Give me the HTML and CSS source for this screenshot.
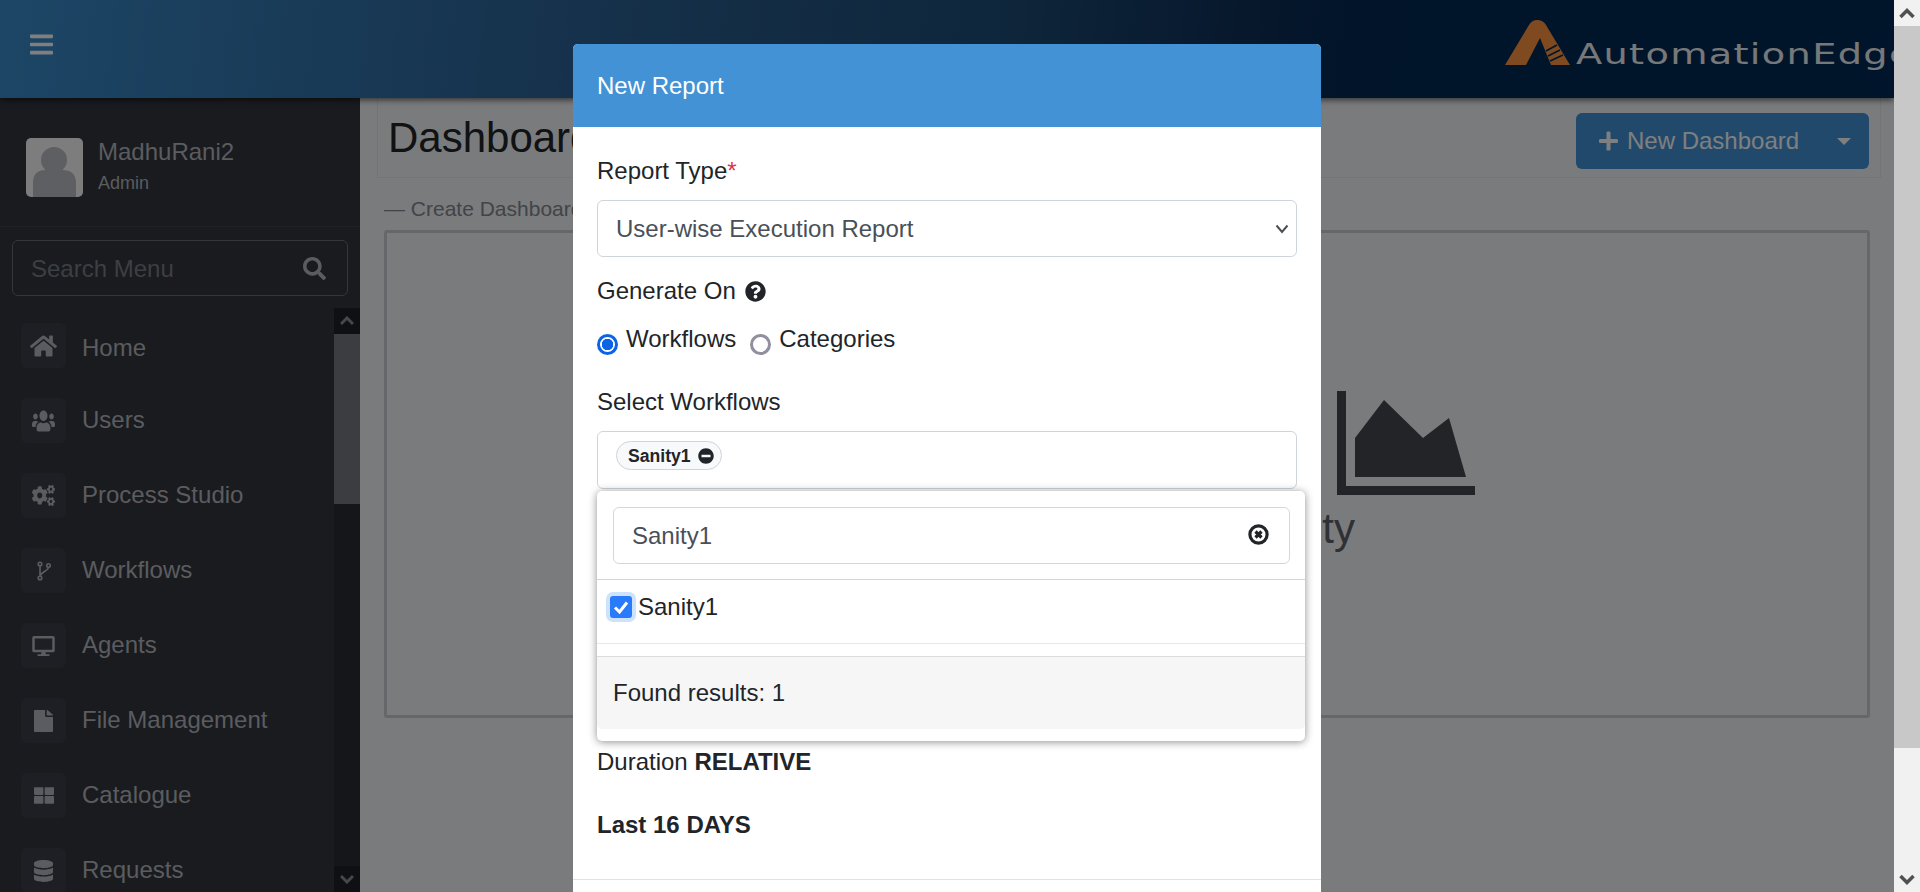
FILE: index.html
```html
<!DOCTYPE html>
<html lang="en">
<head>
    <meta charset="UTF-8">
    <meta name="viewport" content="width=device-width, initial-scale=1.0">
    <title>AutomationEdge Dashboard</title>
    <link rel="stylesheet" href="styles.css">
</head>
<body>
    <div class="page">
        <!-- Top bar -->
        <header class="topbar">
            <svg class="menu-icon" width="23" height="27" viewBox="0 0 448 512"><path d="M16 132h416c8.837 0 16-7.163 16-16V76c0-8.837-7.163-16-16-16H16C7.163 60 0 67.163 0 76v40c0 8.837 7.163 16 16 16zm0 160h416c8.837 0 16-7.163 16-16v-40c0-8.837-7.163-16-16-16H16c-8.837 0-16 7.163-16 16v40c0 8.837 7.163 16 16 16zm0 160h416c8.837 0 16-7.163 16-16v-40c0-8.837-7.163-16-16-16H16c-8.837 0-16 7.163-16 16v40c0 8.837 7.163 16 16 16z"/></svg>
            <div class="logo">
                <svg class="logo-svg" width="66" height="46" viewBox="0 0 66 46"><path class="logo-mark" d="M0 45 L24 5 Q27 0 32 0 Q38 0 41 5 L65 45 H46 L35 18 L21 45 Z"/><path class="logo-stripes" d="M41 31 L52 25 M43 36 L55 30 M45 41 L58 35"/></svg>
                <span class="logo-text">AutomationEdge</span>
            </div>
        </header>

        <div class="layout">
            <!-- Sidebar -->
            <aside class="sidebar">
                <div class="user-block">
                    <svg class="avatar" width="57" height="59" viewBox="0 0 57 59"><rect width="57" height="59" rx="5" fill="#fafafa"/><circle cx="28" cy="22" r="13" fill="#babec4"/><path d="M7 59 V45 Q7 32 20 32 Q28 37 36 32 Q50 32 50 45 V59 Z" fill="#babec4"/></svg>
                    <div class="user-text">
                        <div class="user-name">MadhuRani2</div>
                        <div class="user-role">Admin</div>
                    </div>
                </div>
                <div class="menu-search">
                    <div class="menu-search-box">
                        <span class="menu-search-text">Search Menu</span>
                        <svg width="23" height="23" viewBox="0 0 512 512"><path d="M505 442.7L405.3 343c-4.5-4.5-10.6-7-17-7H372c27.6-35.3 44-79.7 44-128C416 93.1 322.9 0 208 0S0 93.1 0 208s93.1 208 208 208c48.3 0 92.7-16.4 128-44v16.3c0 6.4 2.5 12.5 7 17l99.7 99.7c9.4 9.4 24.6 9.4 33.9 0l28.3-28.3c9.4-9.4 9.4-24.6.1-34zM208 336c-70.7 0-128-57.2-128-128 0-70.7 57.2-128 128-128 70.7 0 128 57.2 128 128 0 70.7-57.2 128-128 128z"/></svg>
                    </div>
                </div>
                <div class="nav-wrap">
                    <nav class="nav-list">
                        <a class="nav-item home"><span class="nav-tile"><svg width="27" height="24" viewBox="0 0 576 512"><path d="M280.37 148.26L96 300.11V464a16 16 0 0 0 16 16l112.06-.29a16 16 0 0 0 15.92-16V368a16 16 0 0 1 16-16h64a16 16 0 0 1 16 16v95.64a16 16 0 0 0 16 16.05L464 480a16 16 0 0 0 16-16V300L295.67 148.26a12.19 12.19 0 0 0-15.3 0zM571.6 251.47L488 182.56V44.05a12 12 0 0 0-12-12h-56a12 12 0 0 0-12 12v72.61L318.47 43a48 48 0 0 0-61 0L4.34 251.47a12 12 0 0 0-1.6 16.9l25.5 31A12 12 0 0 0 45.15 301l235.22-193.74a12.19 12.19 0 0 1 15.3 0L530.9 301a12 12 0 0 0 16.9-1.6l25.5-31a12 12 0 0 0-1.7-16.93z"/></svg></span>Home</a>
                        <a class="nav-item"><span class="nav-tile"><svg width="23" height="24" viewBox="0 0 640 512" preserveAspectRatio="none"><path d="M96 224c35.3 0 64-28.7 64-64s-28.7-64-64-64-64 28.7-64 64 28.7 64 64 64zm448 0c35.3 0 64-28.7 64-64s-28.7-64-64-64-64 28.7-64 64 28.7 64 64 64zm32 32h-64c-17.6 0-33.5 7.1-45.1 18.6 40.3 22.1 68.9 62 75.1 109.4h66c17.7 0 32-14.3 32-32v-32c0-35.3-28.7-64-64-64zm-256 0c61.9 0 112-50.1 112-112S381.9 32 320 32 208 82.1 208 144s50.1 112 112 112zm76.8 32h-8.3c-20.8 10-43.9 16-68.5 16s-47.6-6-68.5-16h-8.3C179.6 288 128 339.6 128 403.2V432c0 26.5 21.5 48 48 48h288c26.5 0 48-21.5 48-48v-28.8c0-63.6-51.6-115.2-115.2-115.2zm-223.7-13.4C161.5 263.1 145.6 256 128 256H64c-35.3 0-64 28.7-64 64v32c0 17.7 14.3 32 32 32h65.9c6.3-47.4 34.9-87.3 75.2-109.4z"/></svg></span>Users</a>
                        <a class="nav-item"><span class="nav-tile"><svg width="23" height="21" viewBox="0 0 640 512" preserveAspectRatio="none"><path d="M512.1 191l-8.2 14.3c-3 5.3-9.4 7.5-15.1 5.4-11.8-4.4-22.6-10.7-32.1-18.6-4.6-3.8-5.8-10.5-2.8-15.7l8.2-14.3c-6.9-8-12.3-17.3-15.9-27.4h-16.5c-6 0-11.2-4.3-12.2-10.3-2-12-2.1-24.6 0-37.1 1-6 6.2-10.4 12.2-10.4h16.5c3.6-10.1 9-19.4 15.9-27.4l-8.2-14.3c-3-5.2-1.9-11.9 2.8-15.7 9.5-7.9 20.4-14.2 32.1-18.6 5.7-2.1 12.1.1 15.1 5.4l8.2 14.3c10.5-1.9 21.2-1.9 31.7 0L552 6.3c3-5.3 9.4-7.5 15.1-5.4 11.8 4.4 22.6 10.7 32.1 18.6 4.6 3.8 5.8 10.5 2.8 15.7l-8.2 14.3c6.9 8 12.3 17.3 15.9 27.4h16.5c6 0 11.2 4.3 12.2 10.3 2 12 2.1 24.6 0 37.1-1 6-6.2 10.4-12.2 10.4h-16.5c-3.6 10.1-9 19.4-15.9 27.4l8.2 14.3c3 5.2 1.9 11.9-2.8 15.7-9.5 7.9-20.4 14.2-32.1 18.6-5.7 2.1-12.1-.1-15.1-5.4l-8.2-14.3c-10.4 1.9-21.2 1.9-31.7 0zm-10.5-58.8c38.5 29.6 82.4-14.3 52.8-52.8-38.5-29.7-82.4 14.3-52.8 52.8zM386.3 286.1l33.7 16.8c10.1 5.8 14.5 18.1 10.5 29.1-8.9 24.2-26.4 46.4-42.6 65.8-7.4 8.9-20.2 11.1-30.3 5.3l-29.1-16.8c-16 13.7-34.6 24.6-54.9 31.7v33.6c0 11.6-8.3 21.6-19.7 23.6-24.6 4.2-50.4 4.4-75.9 0-11.5-2-20-11.9-20-23.6V418c-20.3-7.2-38.9-18-54.9-31.7L74 403c-10 5.8-22.9 3.6-30.3-5.3-16.2-19.4-33.3-41.6-42.2-65.7-4-10.9.4-23.2 10.5-29.1l33.3-16.8c-3.9-20.9-3.9-42.4 0-63.4L12 205.8c-10.1-5.8-14.6-18.1-10.5-29 8.9-24.2 26-46.4 42.2-65.8 7.4-8.9 20.2-11.1 30.3-5.3l29.1 16.8c16-13.7 34.6-24.6 54.9-31.7V57.1c0-11.5 8.2-21.5 19.6-23.5 24.6-4.2 50.5-4.4 76-.1 11.5 2 20 11.9 20 23.6v33.6c20.3 7.2 38.9 18 54.9 31.7l29.1-16.8c10-5.8 22.9-3.6 30.3 5.3 16.2 19.4 33.2 41.6 42.1 65.8 4 10.9.1 23.2-10 29.1l-33.7 16.8c3.9 21 3.9 42.5 0 63.5zm-117.6 21.1c59.2-77-28.7-164.9-105.7-105.7-59.2 77 28.7 164.9 105.7 105.7zm243.4 182.7l-8.2 14.3c-3 5.3-9.4 7.5-15.1 5.4-11.8-4.4-22.6-10.7-32.1-18.6-4.6-3.8-5.8-10.5-2.8-15.7l8.2-14.3c-6.9-8-12.3-17.3-15.9-27.4h-16.5c-6 0-11.2-4.3-12.2-10.3-2-12-2.1-24.6 0-37.1 1-6 6.2-10.4 12.2-10.4h16.5c3.6-10.1 9-19.4 15.9-27.4l-8.2-14.3c-3-5.2-1.9-11.9 2.8-15.7 9.5-7.9 20.4-14.2 32.1-18.6 5.7-2.1 12.1.1 15.1 5.4l8.2 14.3c10.5-1.9 21.2-1.9 31.7 0l8.2-14.3c3-5.3 9.4-7.5 15.1-5.4 11.8 4.4 22.6 10.7 32.1 18.6 4.6 3.8 5.8 10.5 2.8 15.7l-8.2 14.3c6.9 8 12.3 17.3 15.9 27.4h16.5c6 0 11.2 4.3 12.2 10.3 2 12 2.1 24.6 0 37.1-1 6-6.2 10.4-12.2 10.4h-16.5c-3.6 10.1-9 19.4-15.9 27.4l8.2 14.3c3 5.2 1.9 11.9-2.8 15.7-9.5 7.9-20.4 14.2-32.1 18.6-5.7 2.1-12.1-.1-15.1-5.4l-8.2-14.3c-10.4 1.9-21.2 1.9-31.7 0zM501.6 431c38.5 29.6 82.4-14.3 52.8-52.8-38.5-29.6-82.4 14.3-52.8 52.8z"/></svg></span>Process Studio</a>
                        <a class="nav-item"><span class="nav-tile"><svg class="branch" width="14" height="20" viewBox="0 0 14 20"><circle cx="3" cy="3" r="1.8"/><circle cx="3" cy="17" r="1.8"/><circle cx="11.5" cy="4.5" r="1.8"/><path d="M3 5 V15 M11.5 6.5 C11 10 4 11 3 15"/></svg></span>Workflows</a>
                        <a class="nav-item"><span class="nav-tile"><svg width="23" height="20" viewBox="0 0 576 512"><path d="M528 0H48C21.5 0 0 21.5 0 48v320c0 26.5 21.5 48 48 48h192l-16 48h-72c-13.3 0-24 10.7-24 24s10.7 24 24 24h272c13.3 0 24-10.7 24-24s-10.7-24-24-24h-72l-16-48h192c26.5 0 48-21.5 48-48V48c0-26.5-21.5-48-48-48zm-16 352H64V64h448v288z"/></svg></span>Agents</a>
                        <a class="nav-item"><span class="nav-tile"><svg width="19" height="22" viewBox="0 0 384 512" preserveAspectRatio="none"><path d="M224 136V0H24C10.7 0 0 10.7 0 24v464c0 13.3 10.7 24 24 24h336c13.3 0 24-10.7 24-24V160H248c-13.2 0-24-10.8-24-24zm160-14.1v6.1H256V0h6.1c6.4 0 12.5 2.5 17 7l97.9 98c4.5 4.5 7 10.6 7 16.9z"/></svg></span>File Management</a>
                        <a class="nav-item"><span class="nav-tile"><svg width="20" height="19" viewBox="0 0 512 512" preserveAspectRatio="none"><path d="M296 32h192c13.255 0 24 10.745 24 24v160c0 13.255-10.745 24-24 24H296c-13.255 0-24-10.745-24-24V56c0-13.255 10.745-24 24-24zm-80 0H24C10.745 32 0 42.745 0 56v160c0 13.255 10.745 24 24 24h192c13.255 0 24-10.745 24-24V56c0-13.255-10.745-24-24-24zM0 296v160c0 13.255 10.745 24 24 24h192c13.255 0 24-10.745 24-24V296c0-13.255-10.745-24-24-24H24c-13.255 0-24 10.745-24 24zm296 184h192c13.255 0 24-10.745 24-24V296c0-13.255-10.745-24-24-24H296c-13.255 0-24 10.745-24 24v160c0 13.255 10.745 24 24 24z"/></svg></span>Catalogue</a>
                        <a class="nav-item"><span class="nav-tile"><svg width="19" height="22" viewBox="0 0 448 512" preserveAspectRatio="none"><path d="M448 73.143v45.714C448 159.143 347.667 192 224 192S0 159.143 0 118.857V73.143C0 32.857 100.333 0 224 0s224 32.857 224 73.143zM448 176v102.857C448 319.143 347.667 352 224 352S0 319.143 0 278.857V176c48.125 33.143 136.208 48.572 224 48.572S399.874 209.143 448 176zm0 160v102.857C448 479.143 347.667 512 224 512S0 479.143 0 438.857V336c48.125 33.143 136.208 48.572 224 48.572S399.874 369.143 448 336z"/></svg></span>Requests</a>
                    </nav>
                    <div class="nav-scrollbar">
                        <div class="nav-scroll-btn"><svg width="14" height="10" viewBox="0 0 14 10"><path d="M1 8 L7 2 L13 8"/></svg></div>
                        <div class="nav-scroll-thumb"></div>
                        <div class="nav-scroll-track"></div>
                        <div class="nav-scroll-btn"><svg width="14" height="10" viewBox="0 0 14 10"><path d="M1 2 L7 8 L13 2"/></svg></div>
                    </div>
                </div>
            </aside>

            <!-- Dashboard page under the dialog -->
            <main class="main">
                <div class="title-card">
                    <h2 class="page-title">Dashboard</h2>
                    <button class="new-btn">
                        <svg width="19" height="22" viewBox="0 0 448 512"><path d="M416 208H272V64c0-17.67-14.33-32-32-32h-32c-17.67 0-32 14.33-32 32v144H32c-17.67 0-32 14.33-32 32v32c0 17.67 14.33 32 32 32h144v144c0 17.67 14.33 32 32 32h32c17.67 0 32-14.33 32-32V304h144c17.67 0 32-14.33 32-32v-32c0-17.67-14.33-32-32-32z"/></svg>
                        <span>New Dashboard</span>
                        <i class="btn-caret"></i>
                    </button>
                </div>
                <div class="create-line">— Create Dashboard</div>
                <div class="empty-box">
                    <svg class="empty-chart" width="138" height="104" viewBox="0 0 138 104"><path d="M0 0 H9 V95 H138 V104 H0 Z M18 47 L47 9 L86 47 L112 27 L129 86 H18 Z"/></svg>
                    <div class="empty-text">No Activity</div>
                </div>
            </main>
        </div>

        <div class="backdrop"></div>

        <!-- New Report dialog -->
        <div class="modal">
            <div class="modal-header">New Report</div>
            <div class="modal-body">
                <div class="field-label first">Report Type<span class="required">*</span></div>
                <div class="select-wrap">
                    <select class="form-select"><option>User-wise Execution Report</option></select>
                    <svg class="select-arrow" width="14" height="10" viewBox="0 0 14 10"><path d="M1.5 1.5 L7 8 L12.5 1.5"/></svg>
                </div>
                <div class="field-label generate">
                    Generate On
                    <svg width="21" height="21" viewBox="0 0 512 512"><path d="M504 256c0 136.997-111.043 248-248 248S8 392.997 8 256C8 119.083 119.043 8 256 8s248 111.083 248 248zM262.655 90c-54.497 0-89.255 22.957-116.549 63.758-3.536 5.286-2.353 12.415 2.715 16.258l34.699 26.31c5.205 3.947 12.621 3.008 16.665-2.122 17.864-22.658 30.113-35.797 57.303-35.797 20.429 0 45.698 13.148 45.698 32.958 0 14.976-12.363 22.667-32.534 33.976C247.128 238.528 216 254.941 216 296v4c0 6.627 5.373 12 12 12h56c6.627 0 12-5.373 12-12v-1.333c0-28.462 83.186-29.647 83.186-106.667 0-58.002-60.165-102-116.531-102zM256 338c-25.365 0-46 20.635-46 46 0 25.364 20.635 46 46 46s46-20.636 46-46c0-25.365-20.635-46-46-46z"/></svg>
                </div>
                <div class="radio-row">
                    <label class="radio-label"><input type="radio" name="gen" class="radio" checked>Workflows</label>
                    <label class="radio-label"><input type="radio" name="gen" class="radio">Categories</label>
                </div>
                <div class="field-label workflows">Select Workflows</div>
                <div class="multi-wrap">
                    <div class="multi-box">
                        <span class="tag">Sanity1
                            <svg width="16" height="16" viewBox="0 0 512 512"><path d="M256 8C119 8 8 119 8 256s111 248 248 248 248-111 248-248S393 8 256 8zM124 296c-6.6 0-12-5.4-12-12v-56c0-6.6 5.4-12 12-12h264c6.6 0 12 5.4 12 12v56c0 6.6-5.4 12-12 12H124z"/></svg>
                        </span>
                    </div>
                    <div class="dropdown">
                        <div class="dropdown-search">
                            <div class="search-box">
                                <span>Sanity1</span>
                                <svg class="clear-icon" width="21" height="21" viewBox="0 0 21 21"><circle cx="10.5" cy="10.5" r="8.6"/><path d="M7.5 7.5 L13.5 13.5 M13.5 7.5 L7.5 13.5"/></svg>
                            </div>
                        </div>
                        <div class="dropdown-item">
                            <span class="check"><svg width="22" height="22" viewBox="0 0 22 22"><path d="M5 11.5 L9.5 16 L17 6.5"/></svg></span>
                            Sanity1
                        </div>
                        <div class="dropdown-gap"></div>
                        <div class="dropdown-foot">Found results: 1</div>
                    </div>
                </div>
                <div class="duration">Duration <strong>RELATIVE</strong></div>
                <div class="last-days"><strong>Last 16 DAYS</strong></div>
            </div>
            <div class="modal-footer"></div>
        </div>
    </div>

    <!-- Window scrollbar -->
    <div class="page-scrollbar">
        <div class="scroll-btn"><svg width="16" height="11" viewBox="0 0 16 11"><path d="M1.5 9 L8 2.5 L14.5 9"/></svg></div>
        <div class="scroll-thumb"></div>
        <div class="scroll-track"></div>
        <div class="scroll-btn"><svg width="16" height="11" viewBox="0 0 16 11"><path d="M1.5 2 L8 8.5 L14.5 2"/></svg></div>
    </div>
</body>
</html>
```

FILE: styles.css
```css
* {
    box-sizing: border-box;
}
html, body {
    margin: 0;
    height: 100%;
}
body {
    display: flex;
    height: 892px;
    overflow: hidden;
    font-family: "Liberation Sans", Arial, sans-serif;
    font-size: 24px;
    line-height: 36px;
    color: #212529;
}
.page {
    position: relative;
    flex: 1;
    min-width: 0;
    height: 892px;
    overflow: hidden;
    background-color: #f4f6fa;
}

/* top bar */
.topbar {
    position: relative;
    z-index: 2;
    display: flex;
    align-items: center;
    height: 98px;
    padding-left: 30px;
    background: linear-gradient(97deg, #3a8ccc 0%, #2c6296 31%, #1e4e78 52%, #0e2f58 66%, #022854 72%, #002a56 100%);
    box-shadow: 0 2px 6px rgba(0, 0, 0, 0.6);
}
.menu-icon {
    fill: #fff;
    margin-top: -10px;
}
.logo {
    position: relative;
    flex-shrink: 0;
    align-self: flex-start;
    width: 389px;
    height: 60px;
    margin-left: auto;
    margin-top: 20px;
    overflow: hidden;
    white-space: nowrap;
}
.logo-svg {
    display: block;
}
.logo-mark {
    fill: #fe943e;
}
.logo-stripes {
    fill: none;
    stroke: #002a56;
    stroke-width: 1.6;
}
.logo-text {
    position: absolute;
    top: 16px;
    left: 71px;
    font-family: "DejaVu Sans", sans-serif;
    font-size: 29px;
    line-height: 36px;
    color: #eef0f2;
    letter-spacing: 1px;
    transform: scaleX(1.32);
    transform-origin: left center;
}

.layout {
    display: flex;
    height: 794px;
}

/* sidebar */
.sidebar {
    display: flex;
    flex-direction: column;
    flex-shrink: 0;
    width: 360px;
    background-color: #32363f;
    color: #b6b8be;
}
.user-block {
    display: flex;
    gap: 15px;
    height: 129px;
    padding: 40px 0 0 26px;
    border-bottom: 1px solid #3e424b;
}
.user-name {
    margin-top: -4px;
    line-height: 36px;
}
.user-role {
    font-size: 18px;
    line-height: 26px;
}
.menu-search {
    padding: 13px 12px 12px;
}
.menu-search-box {
    display: flex;
    align-items: center;
    justify-content: space-between;
    height: 56px;
    padding: 2px 21px 0 18px;
    border: 1.5px solid #6a6d74;
    border-radius: 6px;
}
.menu-search-box svg {
    fill: #b6b8be;
    margin-top: -2px;
}
.menu-search-text {
    color: #7a7e85;
}
.nav-wrap {
    display: flex;
    flex: 1;
    min-height: 0;
}
.nav-list {
    flex: 1;
    display: flex;
    flex-direction: column;
    gap: 30px;
    padding: 15px 0 0 21px;
    overflow: hidden;
}
.nav-item {
    display: flex;
    align-items: center;
    flex-shrink: 0;
    gap: 16px;
    height: 45px;
    padding-bottom: 2px;
}
.nav-item.home {
    padding: 4px 0 0;
}
.nav-tile {
    display: flex;
    align-items: center;
    justify-content: center;
    align-self: flex-start;
    width: 45px;
    height: 45px;
    border-radius: 6px;
    background-color: #3a3e48;
}
.nav-item.home .nav-tile {
    margin-top: -4px;
}
.nav-tile svg {
    fill: #b6b8be;
}
.nav-tile .branch {
    fill: none;
    stroke: #b6b8be;
    stroke-width: 1.6;
}
.nav-scrollbar {
    display: flex;
    flex-direction: column;
    flex-shrink: 0;
    width: 26px;
    background-color: #282c34;
}
.nav-scroll-btn {
    display: flex;
    align-items: center;
    justify-content: center;
    flex-shrink: 0;
    height: 26px;
    background-color: #1e2026;
}
.nav-scroll-btn svg {
    fill: none;
    stroke: #8c8e94;
    stroke-width: 3;
}
.nav-scroll-thumb {
    flex-shrink: 0;
    height: 170px;
    background-color: #787a80;
}
.nav-scroll-track {
    flex: 1;
}

/* main area */
.main {
    flex: 1;
    min-width: 0;
    padding: 0 13px 0 17px;
}
.title-card {
    display: flex;
    align-items: flex-start;
    justify-content: space-between;
    height: 80px;
    padding: 15px 11px 0 10px;
    border: 1.5px solid #e6e8ec;
    border-top: 0;
}
.page-title {
    margin: 0;
    font-size: 42px;
    font-weight: 400;
    line-height: 50px;
}
.new-btn {
    display: flex;
    align-items: center;
    width: 293px;
    height: 56px;
    padding: 0 18px 0 23px;
    border: 0;
    border-radius: 6px;
    background-color: #4392d6;
    color: #fff;
    font: inherit;
}
.new-btn svg {
    fill: #fff;
    margin-right: 9px;
}
.btn-caret {
    margin-left: auto;
    border-left: 7px solid transparent;
    border-right: 7px solid transparent;
    border-top: 7px solid #fff;
}
.create-line {
    margin-top: 15px;
    padding-left: 7px;
    font-size: 21px;
    line-height: 32px;
    color: #848890;
}
.empty-box {
    display: flex;
    flex-direction: column;
    align-items: flex-end;
    height: 488px;
    margin: 5px 11px 0 7px;
    padding: 158px 392px 0 0;
    border: 3px solid #cdcfd4;
    border-radius: 3px;
}
.empty-chart {
    fill: #44494f;
}
.empty-text {
    margin-top: 9px;
    margin-right: 120px;
    font-size: 42px;
    line-height: 50px;
    color: #5e6269;
    white-space: nowrap;
}

.backdrop {
    position: absolute;
    inset: 0;
    z-index: 5;
    background-color: rgba(0, 0, 0, 0.5);
}

/* dialog */
.modal {
    position: absolute;
    z-index: 6;
    top: 44px;
    left: 573px;
    width: 748px;
    background-color: #fff;
    border-radius: 5px 5px 0 0;
}
.modal-header {
    height: 83px;
    padding: 24px 24px 0;
    border-radius: 5px 5px 0 0;
    background-color: #4392d6;
    color: #fff;
}
.modal-body {
    padding: 26px 24px 36px;
}
.field-label {
    height: 36px;
}
.required {
    color: #dc3545;
}
.select-wrap {
    position: relative;
    margin-top: 11px;
}
.form-select {
    display: block;
    width: 100%;
    height: 57px;
    padding: 0 18px;
    border: 1.5px solid #ced4da;
    border-radius: 6px;
    background-color: #fff;
    appearance: none;
    color: #495057;
    font: inherit;
}
.select-arrow {
    position: absolute;
    top: 24px;
    right: 8px;
    fill: none;
    stroke: #495057;
    stroke-width: 2;
}
.generate {
    display: flex;
    align-items: center;
    gap: 9px;
    margin-top: 16px;
}
.generate svg {
    fill: #212529;
}
.radio-row {
    display: flex;
    gap: 14px;
    margin-top: 12px;
}
.radio-label {
    display: flex;
    align-items: flex-start;
}
.radio {
    width: 21px;
    height: 21px;
    margin: 13px 8px 0 0;
    border: 3px solid #8f8f9d;
    border-radius: 50%;
    background-color: #fff;
    appearance: none;
}
.radio:checked {
    border-color: #0b63e5;
    background: radial-gradient(circle, #0b63e5 0 5.5px, #fff 6px);
}
.workflows {
    margin-top: 27px;
}
.multi-wrap {
    position: relative;
    margin-top: 11px;
}
.multi-box {
    display: flex;
    align-items: flex-start;
    height: 58px;
    padding: 9px 18px 0;
    border: 1.5px solid #ced4da;
    border-radius: 6px;
}
.tag {
    display: inline-flex;
    align-items: center;
    gap: 7px;
    height: 29px;
    padding: 0 7px 0 11px;
    border: 1.5px solid #ced4da;
    border-radius: 15px;
    background-color: #f8f9fa;
    font-size: 17.6px;
    font-weight: 700;
}
.tag svg {
    fill: #212529;
}
.dropdown {
    position: absolute;
    z-index: 2;
    top: 60px;
    left: 0;
    width: 708px;
    height: 250px;
    border-radius: 5px;
    background-color: #fff;
    box-shadow: 0 1px 8px rgba(0, 0, 0, 0.45);
}
.dropdown-search {
    height: 89px;
    padding: 16px 15px 0 16px;
    border-bottom: 1.5px solid #d5d5d5;
}
.search-box {
    display: flex;
    align-items: center;
    justify-content: space-between;
    height: 57px;
    padding: 0 20px 0 18px;
    border: 1.5px solid #d5d7da;
    border-radius: 6px;
    color: #495057;
}
.clear-icon {
    fill: none;
    stroke: #212529;
    stroke-width: 3.2;
    margin-top: -2px;
}
.dropdown-item {
    display: flex;
    height: 64px;
    padding: 9px 0 0 13px;
    border-bottom: 1.5px solid #e8e8e8;
}
.check {
    display: block;
    width: 22px;
    height: 22px;
    margin: 7px 6px 0 0;
    border-radius: 3px;
    background-color: #2a7bfb;
    box-shadow: 0 0 0 4px #cde2fb;
}
.check svg {
    display: block;
    fill: none;
    stroke: #fff;
    stroke-width: 3;
}
.dropdown-gap {
    height: 13px;
    border-bottom: 1.5px solid #dcdcdc;
}
.dropdown-foot {
    height: 72px;
    padding: 18px 16px 0;
    border-radius: 0 0 5px 5px;
    background-color: #f6f6f6;
}
.duration {
    height: 36px;
    margin-top: 255px;
}
.last-days {
    height: 36px;
    margin-top: 27px;
}
.modal-footer {
    height: 60px;
    border-top: 1.5px solid #dee2e6;
}

/* window scrollbar */
.page-scrollbar {
    display: flex;
    flex-direction: column;
    flex-shrink: 0;
    width: 26px;
    height: 892px;
    background-color: #f1f1f1;
}
.scroll-btn {
    display: flex;
    align-items: center;
    justify-content: center;
    flex-shrink: 0;
    height: 26px;
}
.scroll-btn svg {
    fill: none;
    stroke: #505050;
    stroke-width: 3.5;
}
.scroll-thumb {
    flex-shrink: 0;
    height: 722px;
    background-color: #c8c8c8;
}
.scroll-track {
    flex: 1;
}
```
